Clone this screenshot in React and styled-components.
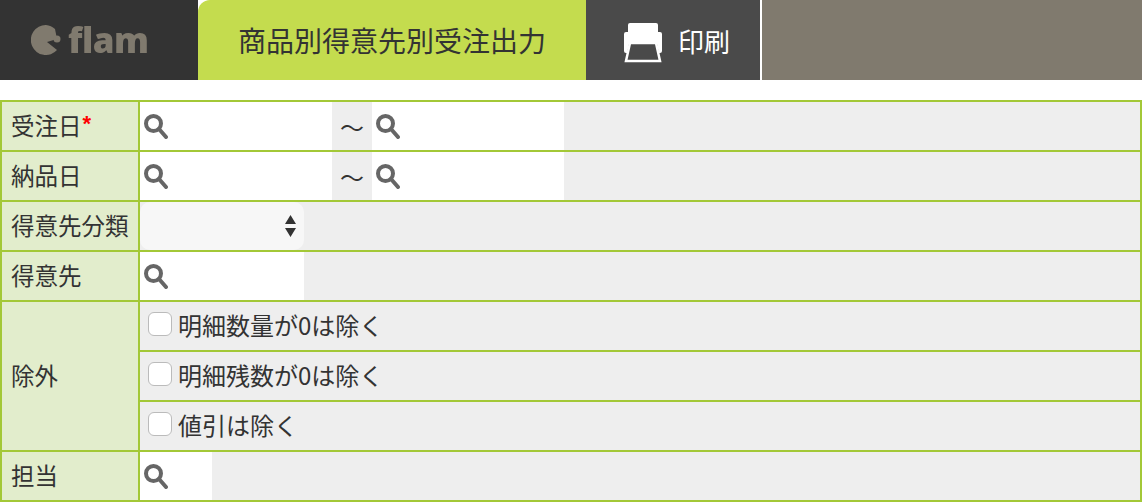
import React from "react";
import styled, { createGlobalStyle } from "styled-components";

const Global = createGlobalStyle`
  html, body { margin: 0; padding: 0; background: #fff; }
  body { font-family: "Liberation Sans", "Noto Sans CJK JP", sans-serif; color: #333; width: 1142px; overflow: hidden; }
`;

const Header = styled.header`
  display: flex; height: 80px; margin-bottom: 20px;
`;
const LogoArea = styled.div`
  width: 198px; background: #333; display: flex; align-items: center; padding-left: 31px; box-sizing: border-box; gap: 6px;
`;
const LogoText = styled.span`
  font-family: "Open Sans", sans-serif; font-weight: 800; font-size: 35px; color: #807a6e; line-height: 1; letter-spacing: -0.5px; filter: blur(0.6px); margin-top: -1px;
`;
const TitleTab = styled.div`
  width: 388px; background: #c4dc4e; border-top-left-radius: 12px; display: flex; align-items: center; justify-content: center;
  font-size: 28px; color: #333; font-family: "Noto Sans CJK JP", sans-serif;
`;
const PrintButton = styled.div`
  width: 174px; background: #4a4a4a; display: flex; align-items: center; padding-left: 38px; box-sizing: border-box; gap: 15px;
  color: #fff; font-size: 26px; font-family: "Noto Sans CJK JP", sans-serif;
`;
const Spare = styled.div`
  flex: 1; margin-left: 2px; background: #807a6e;
`;

const Form = styled.div`
  border: 2px solid #a3c837; border-bottom: none; width: 1142px; box-sizing: border-box;
`;
const Row = styled.div`
  display: flex; border-bottom: 2px solid #a3c837; min-height: 48px;
`;
const Label = styled.div`
  width: 138px; flex: none; background: #e2edcc; border-right: 2px solid #a3c837; display: flex; align-items: center;
  padding-left: 9px; box-sizing: border-box; font-size: 23.5px; line-height: 1; white-space: nowrap;
  font-family: "Noto Sans CJK JP", sans-serif; color: #333;
`;
const Required = styled.span`
  color: #f00; font-size: 22px; font-weight: 700; font-family: "Liberation Sans", sans-serif; margin-left: 1px; line-height: 1; margin-top: -4px;
`;
const Content = styled.div`
  flex: 1; background: #eee; display: flex; align-items: stretch;
`;
const Stack = styled.div`
  flex: 1; display: flex; flex-direction: column;
`;
const SubRow = styled.label`
  height: 48px; background: #eee; display: flex; align-items: center; padding: 0 0 3px 8px; box-sizing: border-box; gap: 6px; font-size: 24px;
  font-family: "Noto Sans CJK JP", sans-serif; color: #333; position: relative;
  & + & { margin-top: 2px; }
  & + &::before { content: ""; position: absolute; left: 0; right: 0; top: -2px; height: 2px; background: #a3c837; }
`;
const Check = styled.span`
  width: 24px; height: 24px; box-sizing: border-box; border: 1px solid #bbb; border-radius: 6px; background: #fff; flex: none; margin-top: -1px;
`;
const Search = styled.div`
  width: ${p => p.$w}px; background: #fff; display: flex; align-items: center; padding-left: 3px; box-sizing: border-box;
`;
const Icon = styled.svg`
  width: 25px; height: 26px; filter: blur(0.5px);
`;
const Tilde = styled.div`
  width: 40px; display: flex; align-items: center; justify-content: center; font-size: 24px; font-family: "Noto Sans CJK JP", sans-serif; color: #333;
`;
const SelectBox = styled.div`
  width: 164px; height: 48px; background: #f7f7f7; border-radius: 10px; display: flex; align-items: center; justify-content: flex-end; padding-right: 8px; box-sizing: border-box;
`;
const Arrows = styled.svg`
  width: 11px; height: 24px;
`;
const LogoMark = styled.svg`
  width: 31px; height: 30px; filter: blur(0.5px);
`;
const PrinterIcon = styled.svg`
  width: 40px; height: 41px; margin-top: 4px; margin-left: -1px; filter: blur(0.5px);
`;

const Magnifier = () => (
  <Icon viewBox="0 0 25 26">
    <circle cx="10.5" cy="10.5" r="7.5" fill="none" stroke="#666" strokeWidth="4" />
    <path d="M16 16 L23 24" stroke="#666" strokeWidth="4" strokeLinecap="round" />
  </Icon>
);

const SearchField = ({ w }) => <Search $w={w}><Magnifier /></Search>;

const Pacman = () => (
  <LogoMark viewBox="0 0 31 30">
    <path d="M15 0 A15 15 0 1 0 26 25 L16 17 L26 14 L24 4 A15 15 0 0 0 15 0 Z" fill="#807a6e" />
    <circle cx="26" cy="14" r="3.5" fill="#807a6e" />
  </LogoMark>
);

const Printer = () => (
  <PrinterIcon viewBox="0 0 40 41">
    <path d="M5 3 Q5 1 7 1 H33 Q35 1 35 3 V11 H5 Z" fill="#fff" />
    <path d="M1 12 Q1 10 3 10 H37 Q39 10 39 12 V29 Q39 31 37 31 H36 L34 22 H6 L4 31 H3 Q1 31 1 29 Z" fill="#fff" />
    <path d="M7 21 H33 L37 39 H3 Z" fill="none" stroke="#fff" strokeWidth="2.5" />
  </PrinterIcon>
);

export default function App() {
  return (
    <>
      <Global />
      <Header>
        <LogoArea><Pacman /><LogoText>flam</LogoText></LogoArea>
        <TitleTab>商品別得意先別受注出力</TitleTab>
        <PrintButton><Printer /><span>印刷</span></PrintButton>
        <Spare />
      </Header>
      <Form>
        <Row>
          <Label>受注日<Required>*</Required></Label>
          <Content><SearchField w={192} /><Tilde>〜</Tilde><SearchField w={192} /></Content>
        </Row>
        <Row>
          <Label>納品日</Label>
          <Content><SearchField w={192} /><Tilde>〜</Tilde><SearchField w={192} /></Content>
        </Row>
        <Row>
          <Label>得意先分類</Label>
          <Content>
            <SelectBox>
              <Arrows viewBox="0 0 11 24"><path d="M5.5 1 L11 10 H0 Z M0 14 H11 L5.5 23 Z" fill="#333" /></Arrows>
            </SelectBox>
          </Content>
        </Row>
        <Row>
          <Label>得意先</Label>
          <Content><SearchField w={164} /></Content>
        </Row>
        <Row>
          <Label>除外</Label>
          <Stack>
            <SubRow><Check />明細数量が0は除く</SubRow>
            <SubRow><Check />明細残数が0は除く</SubRow>
            <SubRow><Check />値引は除く</SubRow>
          </Stack>
        </Row>
        <Row>
          <Label>担当</Label>
          <Content><SearchField w={72} /></Content>
        </Row>
      </Form>
    </>
  );
}
